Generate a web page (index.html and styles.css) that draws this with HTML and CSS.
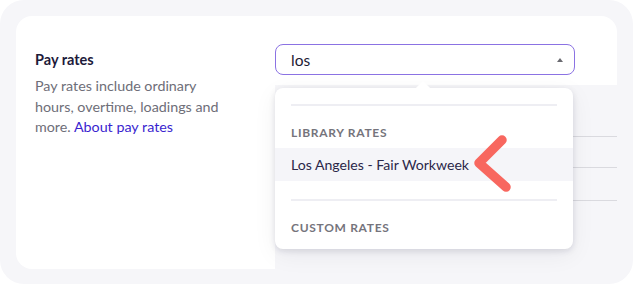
FILE: index.html
```html
<!DOCTYPE html>
<html lang="en">
<head>
    <meta charset="UTF-8">
    <meta name="viewport" content="width=device-width, initial-scale=1.0">
    <title>Pay rates</title>
    <link rel="stylesheet" href="styles.css">
</head>
<body>
    <div class="frame">
        <div class="intro">
            <h3 class="intro-title">Pay rates</h3>
            <p class="intro-text">Pay rates include ordinary hours, overtime, loadings and more. <a href="#">About pay rates</a></p>
        </div>
        <div class="field">
            <div class="select-box">
                <span class="select-value">los</span>
                <span class="select-caret"></span>
            </div>
        </div>
        <div class="below">
            <!-- rows of the form that sit behind the open menu -->
            <div class="behind-rows">
                <div class="behind-row first"></div>
                <div class="behind-row"></div>
                <div class="behind-row last"></div>
            </div>
            <div class="menu">
                <div class="menu-divider"></div>
                <div class="menu-label">Library rates</div>
                <div class="menu-item active">Los Angeles - Fair Workweek</div>
                <div class="menu-divider"></div>
                <div class="menu-label">Custom rates</div>
            </div>
            <svg class="pointer" width="50" height="64" viewBox="0 0 50 64">
                <path d="M30 6 L7 29 L34 53" fill="none" stroke="#f8675f" stroke-width="9.5" stroke-linecap="round" stroke-linejoin="round"/>
            </svg>
        </div>
    </div>
</body>
</html>
```

FILE: styles.css
```css
body {
    margin: 0;
    background-color: #ffffff;
    font-family: Lato, "Open Sans", sans-serif;
}

.frame {
    width: 633px;
    height: 284px;
    box-sizing: border-box;
    padding: 16px 16px 15px 16px;
    background-color: #f6f6f9;
    border-radius: 24px;
    display: grid;
    grid-template-columns: 259px 1fr;
    grid-template-rows: 69px 1fr;
}

.intro {
    grid-column: 1;
    grid-row: 1 / 3;
    background-color: #ffffff;
    border-radius: 16px 0 0 16px;
    padding: 34px 0 0 19px;
}

.intro-title {
    margin: 0 0 6px 0;
    font-size: 14.5px;
    font-weight: 700;
    line-height: 20px;
    color: #1d1a3a;
}

.intro-text {
    margin: 0;
    width: 190px;
    font-size: 14.3px;
    line-height: 20.5px;
    color: #6e6e78;
}

.intro-text a {
    color: #3a1fcf;
    text-decoration: none;
}

.field {
    grid-column: 2;
    grid-row: 1;
    background-color: #ffffff;
    border-radius: 0 16px 0 0;
    padding-top: 28px;
}

.select-box {
    width: 300px;
    height: 31px;
    box-sizing: border-box;
    border: 1.5px solid #8b72e3;
    border-radius: 8px;
    display: flex;
    align-items: center;
    justify-content: space-between;
    padding: 0 11px 0 15px;
}

.select-value {
    font-size: 15.5px;
    color: #1c1a33;
}

.select-caret {
    width: 0;
    height: 0;
    border-left: 3.5px solid transparent;
    border-right: 3.5px solid transparent;
    border-bottom: 4px solid #6a6a70;
}

.below {
    grid-column: 2;
    grid-row: 2;
    position: relative;
}

.behind-rows {
    padding-top: 51px;
}

.behind-row {
    height: 30px;
    border-top: 1px solid #dadadf;
}

.behind-row.last {
    height: 0;
    margin-top: 2px;
}

.menu {
    position: absolute;
    top: 3px;
    left: 0;
    width: 298px;
    height: 161px;
    box-sizing: border-box;
    background-color: #ffffff;
    border-radius: 8px;
    box-shadow: 0 2px 6px rgba(20, 20, 50, 0.12), 0 6px 24px rgba(20, 20, 50, 0.06);
    padding-top: 16px;
}

.menu::before {
    content: "";
    position: absolute;
    top: -5px;
    left: 143px;
    width: 10px;
    height: 10px;
    background-color: #ffffff;
    transform: rotate(45deg);
}

.menu-divider {
    height: 2px;
    margin: 0 16px;
    background-color: #eeeef3;
}

.menu-label {
    margin: 19px 16px 7px 16px;
    font-size: 12px;
    font-weight: 700;
    line-height: 16px;
    letter-spacing: 0.7px;
    text-transform: uppercase;
    color: #75747c;
}

.menu-item {
    height: 33px;
    line-height: 33px;
    padding: 0 16px;
    font-size: 14.1px;
    color: #2b2749;
    margin-bottom: 18px;
}

.menu-item.active {
    background-color: #f5f5f9;
}

.pointer {
    position: absolute;
    left: 197px;
    top: 49px;
}
```
